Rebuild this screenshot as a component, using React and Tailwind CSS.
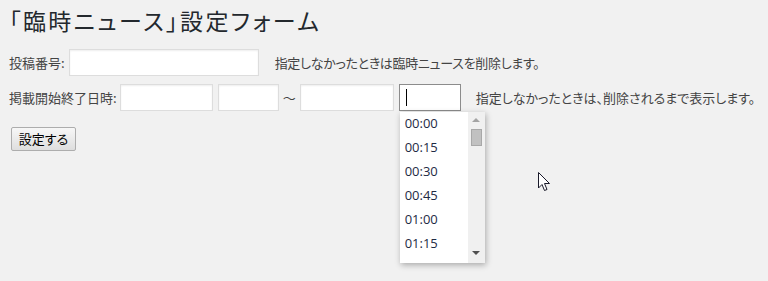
import React from "react";

const font = {
  fontFamily: '"Noto Sans CJK JP", "Noto Sans", sans-serif',
};

const times = ["00:00", "00:15", "00:30", "00:45", "01:00", "01:15"];

const TextInput = ({ className = "" }) => (
  <div
    className={`h-[27px] border border-[#dddddd] bg-white shadow-[inset_0_1px_2px_rgba(0,0,0,0.07)] ${className}`}
  />
);

const TimeDropdown = () => (
  <div className="absolute left-[1px] top-[28px] z-10 flex h-[151px] w-[85px] overflow-hidden bg-white shadow-[1px_2px_6px_rgba(0,0,0,0.3)]">
    <ul className="flex-1">
      {times.map((t) => (
        <li
          key={t}
          className="flex h-[24px] items-center pl-[5px] text-[13px] text-[#1e2a44]"
          style={{ fontFamily: '"Open Sans", "Liberation Sans", sans-serif' }}
        >
          {t}
        </li>
      ))}
    </ul>
    <div className="relative w-[17px] bg-[#f0f0f0]">
      <div className="absolute left-[4px] top-[6px] h-0 w-0 border-x-[4px] border-b-[4px] border-x-transparent border-b-[#a3a3a3]" />
      <div className="absolute left-[3px] top-[17px] h-[17px] w-[11px] border border-[#a8a8a8] bg-[#c1c1c1]" />
      <div className="absolute bottom-[8px] left-[4px] h-0 w-0 border-x-[4px] border-t-[4px] border-x-transparent border-t-[#505050]" />
    </div>
  </div>
);

const App = () => {
  return (
    <div
      className="relative min-h-[281px] bg-[#f1f1f1] px-[9px] pt-[5px] text-[13px] text-[#444444] [font-feature-settings:'palt']"
      style={font}
    >
      <h1 className="text-[23px] font-normal leading-[30px] tracking-[2.4px] text-[#23282d]">
        「臨時ニュース」設定フォーム
      </h1>

      <div className="mt-[14px] flex items-center">
        <label className="mr-[4px]">投稿番号:</label>
        <TextInput className="w-[190px]" />
        <span className="ml-[16px] tracking-[-0.3px]">指定しなかったときは臨時ニュースを削除します。</span>
      </div>

      <div className="mt-[8px] flex items-center">
        <label className="mr-[3px]">掲載開始終了日時:</label>
        <TextInput className="w-[93px]" />
        <TextInput className="ml-[5px] w-[61px]" />
        <span className="mx-[4px]">〜</span>
        <TextInput className="w-[94px]" />
        <div className="relative ml-[5px]">
          <div className="relative h-[27px] w-[62px] border border-[#8c8c8c] bg-white">
            <div className="absolute left-[6px] top-[4px] h-[17px] w-px bg-black" />
          </div>
          <TimeDropdown />
        </div>
        <span className="ml-[15px]">指定しなかったときは、削除されるまで表示します。</span>
      </div>

      <button className="ml-[2px] mt-[16px] h-[24px] w-[65px] rounded-[2px] border border-[#adadad] bg-gradient-to-b from-[#f7f7f7] to-[#dedede] text-[13px] text-black">
        設定する
      </button>

      <svg
        className="absolute left-[538px] top-[172px]"
        width="13"
        height="20"
        viewBox="0 0 13 20"
      >
        <path
          d="M0.5 0.5 L0.5 16 L4 12.5 L6.5 18.5 L9 17.5 L6.5 11.5 L11.5 11.5 Z"
          fill="white"
          stroke="#1a1a2a"
          strokeWidth="1"
          strokeLinejoin="round"
        />
      </svg>
    </div>
  );
};

export default App;
